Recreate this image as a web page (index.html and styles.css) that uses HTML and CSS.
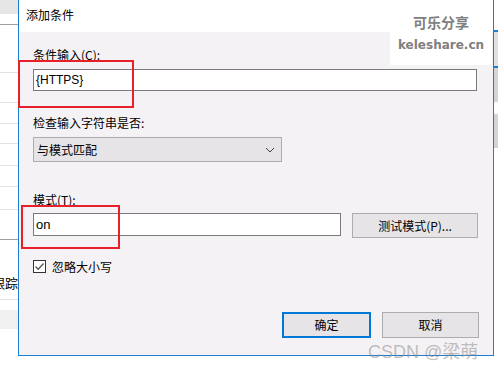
FILE: index.html
```html
<!DOCTYPE html>
<html lang="zh-CN">
  <head>
    <meta charset="UTF-8" />
    <title>添加条件</title>
    <link rel="stylesheet" href="styles.css">
  </head>
  <body>
    <div class="screen">
      <div class="back-left">
        <div class="bl-head"></div>
        <div class="bl-row bl-sep"></div>
        <div class="bl-row h47"></div>
        <div class="bl-row h30"></div>
        <div class="bl-row h21"></div>
        <div class="bl-row h20"></div>
        <div class="bl-row h22"></div>
        <div class="bl-row h21"></div>
        <div class="bl-row h23"></div>
        <div class="bl-row bl-dark h30"></div>
        <div class="bl-text"><span>跟踪</span></div>
        <div class="bl-band"></div>
      </div>

      <div class="dialog">
        <div class="title-bar">添加条件</div>
        <div class="dialog-body">
          <div class="label first">条件输入(C):</div>
          <div class="textbox wide">{HTTPS}</div>

          <div class="label second">检查输入字符串是否:</div>
          <div class="select">
            <span>与模式匹配</span>
            <svg width="10" height="6" viewBox="0 0 10 6"><path d="M1 1 L5 5 L9 1" fill="none" stroke="#444" stroke-width="1"/></svg>
          </div>

          <div class="label third">模式(T):</div>
          <div class="pattern-row">
            <div class="textbox short">on</div>
            <div class="btn test-btn">测试模式(P)...</div>
          </div>

          <div class="check-row">
            <span class="checkbox">
              <svg width="11" height="11" viewBox="0 0 11 11"><path d="M1.5 5.5 L4.2 8.2 L9.5 2.5" fill="none" stroke="#555" stroke-width="1.3"/></svg>
            </span>
            <span>忽略大小写</span>
          </div>

          <div class="actions">
            <div class="btn ok-btn">确定</div>
            <div class="btn cancel-btn">取消</div>
          </div>
        </div>
      </div>

      <div class="back-right">
        <div class="br-a"></div>
        <div class="br-line"></div>
        <div class="br-gray h25"></div>
        <div class="br-line"></div>
        <div class="br-gray2 h25"></div>
        <div class="br-white h12"></div>
        <div class="br-gray2 h25"></div>
      </div>

      <!-- marks drawn on top of the screenshot -->
      <div class="mark mark-1"></div>
      <div class="mark mark-2"></div>
      <div class="wm-box">
        <div class="wm-cn">可乐分享</div>
        <div class="wm-en">keleshare.cn</div>
      </div>
      <div class="csdn">CSDN @梁萌</div>
    </div>
  </body>
</html>
```

FILE: styles.css
```css
body {
  margin: 0;
  background: #fff;
  font-family: "Microsoft YaHei", "Noto Sans CJK SC", "Liberation Sans", sans-serif;
  font-size: 12px;
  color: #000;
}
.screen {
  width: 498px;
  height: 366px;
  display: flex;
  align-items: flex-start;
  position: relative;
  overflow: hidden;
  background: #fff;
}

/* window behind the dialog */
.back-left {
  width: 18px;
  flex-shrink: 0;
  display: flex;
  flex-direction: column;
}
.bl-head {
  height: 14px;
  background: #e6e6e6;
}
.bl-row {
  border-bottom: 1px solid #e2e2e2;
}
.bl-sep {
  height: 10px;
  border-bottom: 1px solid #a0a0a0;
}
.bl-dark {
  border-bottom-color: #a0a0a0;
}
.h47 { height: 47px; }
.h30 { height: 29px; }
.h21 { height: 20px; }
.h20 { height: 19px; }
.h22 { height: 21px; }
.h23 { height: 22px; }
.bl-text {
  height: 60px;
  padding-top: 35px;
  box-sizing: border-box;
  font-size: 13px;
  line-height: 16px;
  white-space: nowrap;
  overflow: hidden;
  border-bottom: 1px solid #e2e2e2;
  direction: rtl;
}
.bl-band {
  height: 19px;
  margin-top: 10px;
  background: #f0f0f0;
}

.back-right {
  flex: 1;
  display: flex;
  flex-direction: column;
}
.br-a { height: 30px; }
.br-line {
  height: 2px;
  background: #1a7fd4;
}
.br-gray { background: #e0e0e0; }
.br-gray2 { background: #d4d4d4; }
.br-white { background: #fff; }
.h25 { height: 34px; }
.h12 { height: 12px; }

/* dialog */
.dialog {
  width: 476px;
  height: 356px;
  flex-shrink: 0;
  box-sizing: border-box;
  border: 1px solid #1a7fd4;
  border-top: none;
  background: #f5f2f5;
  display: flex;
  flex-direction: column;
}
.title-bar {
  height: 32px;
  line-height: 30px;
  padding-left: 7px;
  background: #fff;
  font-size: 12px;
}
.dialog-body {
  padding: 0 14px 0 14px;
  display: flex;
  flex-direction: column;
  align-items: flex-start;
}
.label {
  line-height: 16px;
  height: 16px;
}
.label.first { margin-top: 15px; }
.label.second { margin-top: 24px; }
.label.third { margin-top: 30px; }

.textbox {
  box-sizing: border-box;
  background: #fff;
  border: 1px solid #7a7a7a;
  padding-left: 2px;
  font-family: "Liberation Sans", "Noto Sans CJK SC", sans-serif;
  font-size: 12px;
}
.textbox.wide {
  width: 444px;
  height: 22px;
  line-height: 20px;
  margin-top: 6px;
}
.textbox.short {
  width: 308px;
  height: 23px;
  line-height: 21px;
  font-size: 13px;
}
.select {
  margin-top: 6px;
  width: 249px;
  height: 25px;
  box-sizing: border-box;
  border: 1px solid #adadad;
  background: #e6e4e6;
  display: flex;
  align-items: center;
  justify-content: space-between;
  padding: 0 6px 0 3px;
}
.pattern-row {
  margin-top: 5px;
  width: 445px;
  display: flex;
  justify-content: space-between;
  align-items: flex-start;
}
.btn {
  box-sizing: border-box;
  border: 1px solid #adadad;
  background: #e6e4e6;
  text-align: center;
}
.test-btn {
  width: 126px;
  height: 25px;
  line-height: 23px;
}
.check-row {
  margin-top: 21px;
  display: flex;
  align-items: center;
  gap: 6px;
  height: 14px;
}
.checkbox {
  width: 13px;
  height: 13px;
  box-sizing: border-box;
  border: 1px solid #333;
  background: #fff;
  display: flex;
  align-items: center;
  justify-content: center;
}
.actions {
  margin-top: 39px;
  align-self: flex-end;
  display: flex;
  gap: 11px;
}
.ok-btn {
  width: 89px;
  height: 26px;
  line-height: 22px;
  border: 2px solid #0078d7;
}
.cancel-btn {
  width: 97px;
  height: 26px;
  line-height: 24px;
}

/* annotations over the screenshot */
.mark {
  position: absolute;
  border: 2px solid #e8202a;
  box-sizing: border-box;
}
.mark-1 {
  left: 18px;
  top: 60px;
  width: 116px;
  height: 48px;
}
.mark-2 {
  left: 21px;
  top: 205px;
  width: 99px;
  height: 44px;
}
.wm-box {
  position: absolute;
  left: 390px;
  top: 0;
  width: 102px;
  height: 65px;
  background: #fff;
  text-align: center;
  color: #808080;
  font-weight: bold;
}
.wm-cn {
  margin-top: 13px;
  font-size: 14px;
  line-height: 18px;
}
.wm-en {
  margin-top: 5px;
  font-family: "DejaVu Sans", sans-serif;
  font-size: 12px;
  line-height: 18px;
}
.csdn {
  position: absolute;
  left: 368px;
  top: 337px;
  font-family: "Liberation Sans", "Noto Sans CJK SC", sans-serif;
  font-size: 18px;
  color: rgba(140, 140, 140, 0.55);
  white-space: nowrap;
}
```
